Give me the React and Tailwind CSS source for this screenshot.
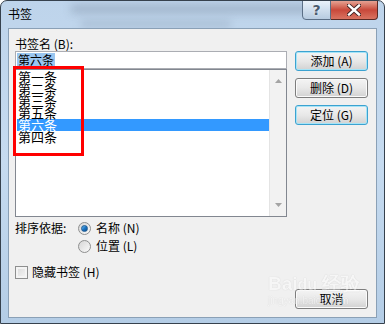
import React from 'react';

const cjk = "font-['SimSun','Noto_Sans_CJK_SC',sans-serif]";

function Button({ label, primary }) {
  return (
    <button
      className={`w-[73px] h-[20px] rounded-[3px] border text-[12px] leading-[14px] text-black bg-gradient-to-b from-[#f4f4f4] via-[#e8e8e8] to-[#d2d2d2] ${
        primary
          ? 'border-[#3ca2d0] shadow-[inset_0_0_0_1px_#a6e4f7]'
          : 'border-[#7d7d7d] shadow-[inset_0_0_0_1px_#fbfbfb]'
      }`}
    >
      {label}
    </button>
  );
}

function Radio({ checked }) {
  return (
    <span className="w-[13px] h-[13px] rounded-full border border-[#8e8f8f] bg-gradient-to-br from-[#d6d6d6] to-[#fafafa] flex items-center justify-center">
      {checked && (
        <span className="w-[7px] h-[7px] rounded-full bg-gradient-to-br from-[#6cc0f2] via-[#1a74c4] to-[#0d4f8c] border border-[#1f5a91]" />
      )}
    </span>
  );
}

export default function App() {
  const items = ['第一条', '第二条', '第三条', '第五条', '第六条', '第四条'];

  return (
    <div className={`relative w-[385px] h-[324px] overflow-hidden rounded-t-[7px] border border-[#36414d] bg-gradient-to-b from-[#bed4eb] via-[#c6dbf0] to-[#b4cde6] flex flex-col ${cjk}`}>
      {/* blurred glass behind title */}
      <div className="absolute left-[70px] top-[4px] w-[240px] h-[8px] bg-[#8a9db3] blur-[4px] opacity-60" />
      <div className="absolute left-[80px] top-[20px] w-[150px] h-[6px] bg-[#8a9db3] blur-[4px] opacity-50" />

      {/* Title bar */}
      <div className="relative h-[27px] flex items-start">
        <span className="pl-[7px] pt-[6px] text-[12px] leading-[14px] text-black">书签</span>
        <div className="ml-auto mr-[6px] -mt-px flex">
          <div className="w-[29px] h-[20px] rounded-bl-[4px] border border-[#5b6f86] bg-gradient-to-b from-[#eaf2fa] via-[#cfdeed] to-[#b7cbe0] flex items-center justify-center">
            <span className="text-[14px] font-bold leading-none text-[#4a5b6e] font-['DejaVu_Sans',sans-serif] [text-shadow:0_0_2px_#ffffff]">?</span>
          </div>
          <div className="w-[47px] h-[20px] rounded-br-[4px] border border-l-0 border-[#5a2a25] bg-gradient-to-b from-[#e5a293] via-[#c8483a] to-[#d97361] flex items-center justify-center">
            <svg width="14" height="12" viewBox="0 0 14 12">
              <path d="M2 1.5 L12 10.5 M12 1.5 L2 10.5" stroke="#3b2020" strokeWidth="4.2" strokeLinecap="square" />
              <path d="M2 1.5 L12 10.5 M12 1.5 L2 10.5" stroke="#ffffff" strokeWidth="2.4" strokeLinecap="square" />
            </svg>
          </div>
        </div>
      </div>

      {/* Client area */}
      <div className="relative mx-[7px] mb-[5px] flex-1 bg-[#f0f0f0] border border-[#8aa0b6] flex flex-col pl-[6px] pr-[8px] text-[12px] leading-[14px] text-black">
        <div className="flex">
          <div className="w-[272px] flex flex-col pt-[8px]">
            <span>书签名 (B):</span>
            <div className="h-[18px] border border-[#abadb3] bg-white flex items-center pl-[1px]">
              <span className="bg-[#9ac6f0] px-[1px] leading-[14px]">第六条</span>
            </div>
            <div className="h-[148px] border border-[#828790] bg-white flex">
              <div className="flex-1 pt-[1px] pl-[1px]">
                {items.map((t, i) => (
                  <div
                    key={t}
                    className={`h-[12px] text-[13px] leading-[12px] pl-[1px] ${i === 4 ? 'bg-[#3399ff] text-white' : ''}`}
                  >
                    {t}
                  </div>
                ))}
              </div>
              <div className="w-[17px] bg-[#f2f2f2] border-l border-[#e4e4e4] flex flex-col items-center justify-between py-[9px]">
                <svg width="7" height="4" viewBox="0 0 7 4"><path d="M0 4 L3.5 0 L7 4 Z" fill="#a4a4a4" /></svg>
                <svg width="7" height="4" viewBox="0 0 7 4"><path d="M0 0 L3.5 4 L7 0 Z" fill="#a4a4a4" /></svg>
              </div>
            </div>
          </div>
          <div className="ml-auto pt-[22px] flex flex-col gap-[7px]">
            <Button label="添加 (A)" primary />
            <Button label="删除 (D)" />
            <Button label="定位 (G)" primary />
          </div>
        </div>

        {/* Sort options */}
        <div className="mt-[4px] flex">
          <span className="w-[63px]">排序依据:</span>
          <div className="flex flex-col gap-[4px]">
            <div className="flex items-center gap-[5px]">
              <Radio checked />
              <span>名称 (N)</span>
            </div>
            <div className="flex items-center gap-[5px]">
              <Radio />
              <span>位置 (L)</span>
            </div>
          </div>
        </div>

        <div className="mt-[12px] flex items-center gap-[4px]">
          <span className="w-[13px] h-[13px] border border-[#8e8f8f] bg-gradient-to-br from-[#d9d9d9] to-[#f7f7f7] shadow-[inset_0_0_0_2px_#f4f4f4]" />
          <span>隐藏书签 (H)</span>
        </div>

        <div className="mt-[10px] flex justify-end">
          <Button label="取消" />
        </div>

        {/* watermark */}
        <div className="absolute left-[259px] top-[245px] flex flex-col items-start pointer-events-none opacity-45">
          <span className="text-[19px] leading-[20px] font-bold text-white font-['Liberation_Sans',sans-serif] [text-shadow:0_0_1px_#9a9a9a]">Bai<span className="text-[16px]">du</span> 经验</span>
          <span className="text-[10px] leading-[11px] text-white font-['Liberation_Sans',sans-serif] [text-shadow:0_0_1px_#9a9a9a]">jingyan.baidu.com</span>
        </div>
      </div>

      {/* red highlight */}
      <div className="absolute left-[12px] top-[65px] w-[71px] h-[90px] border-[3px] border-[#ff0000]" />
    </div>
  );
}
